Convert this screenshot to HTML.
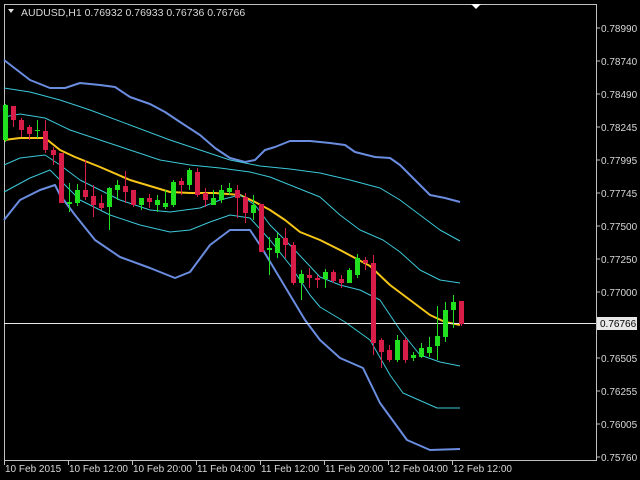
<!DOCTYPE html>
<html><head><style>
html,body{margin:0;padding:0;background:#000;}
svg{display:block;}
text{font-family:"Liberation Sans",sans-serif;font-size:10px;fill:#d8d8d8;}
</style></head><body>
<svg width="640" height="480" viewBox="0 0 640 480" xmlns="http://www.w3.org/2000/svg">
<rect width="640" height="480" fill="#000"/>
<!-- frame -->
<polyline points="4.5,460.5 4.5,4.5 596.5,4.5 596.5,460.5 4.5,460.5" fill="none" stroke="#c0c0c0" stroke-width="1"/>
<polygon points="471,4 481,4 476,9" fill="#fff"/>
<!-- header -->
<polygon points="8,9 14,9 11,13" fill="#e0e0e0"/>
<text x="21" y="16" style="font-size:10.5px">AUDUSD,H1  0.76932 0.76933 0.76736 0.76766</text>
<!-- bands -->
<g fill="none" stroke-linejoin="round">
<polyline stroke="#6a8de0" stroke-width="2" points="4,60 30,80 50,88 65,88 80,83 100,85 115,87 130,97 150,104 165,112 180,122 200,135 215,148 230,158 245,162 255,160 265,150 275,147 290,141 310,141 330,143 345,145 355,152 375,157 390,158 400,165 410,175 420,185 430,195 445,198 460,202"/>
<polyline stroke="#3cc8d8" stroke-width="1" points="4,88 30,92 60,100 90,110 130,125 170,140 200,150 230,160 260,166 290,169 320,173 350,180 380,188 400,200 420,215 440,230 460,241"/>
<polyline stroke="#3cc8d8" stroke-width="1" points="4,117 20,114 45,118 70,130 100,140 130,150 160,160 190,165 220,168 250,172 270,177 290,185 320,197 340,215 360,230 383,240 400,252 420,270 440,280 460,283"/>
<polyline stroke="#f5c518" stroke-width="2" points="4,140 20,138 45,138 60,150 75,157 100,167 130,180 150,186 170,192 190,193 215,193 240,195 255,202 270,210 285,220 300,232 320,240 340,250 355,258 370,266 390,285 410,300 430,315 445,322 460,325"/>
<polyline stroke="#3cc8d8" stroke-width="1" points="4,165 20,158 45,155 60,165 80,180 120,200 150,210 170,212 200,208 220,200 240,195 255,205 270,225 290,245 320,277 340,285 360,290 380,300 400,330 420,355 440,362 460,366"/>
<polyline stroke="#3cc8d8" stroke-width="1" points="4,192 30,178 50,170 60,180 80,200 110,215 140,225 170,232 190,230 210,222 230,215 250,218 270,240 290,265 310,295 320,307 345,322 370,340 390,375 403,393 437,408 460,408"/>
<polyline stroke="#6a8de0" stroke-width="2" points="4,220 20,200 40,190 55,185 60,195 75,215 95,240 120,257 150,268 175,278 190,272 210,245 230,230 250,230 260,245 275,270 290,295 305,320 320,340 340,358 363,368 380,403 407,440 430,450 460,449"/>
</g>
<!-- current price line -->
<line x1="4" y1="323.5" x2="596" y2="323.5" stroke="#e8e8e8" stroke-width="1"/>
<!-- candles -->
<g id="c">
<!-- x, wickTop, wickBot, bodyTop, bodyBot, color -->
</g>
<g stroke-width="1">
<!-- generated manually -->
<line x1="5.5" y1="104" x2="5.5" y2="142" stroke="#20e020"/><rect x="3" y="105" width="5" height="35" fill="#20e020"/>
<line x1="13.5" y1="106" x2="13.5" y2="127" stroke="#d81e48"/><rect x="11" y="106" width="5" height="14" fill="#d81e48"/>
<line x1="21.5" y1="118" x2="21.5" y2="137" stroke="#d81e48"/><rect x="19" y="120" width="5" height="10" fill="#d81e48"/>
<line x1="29.5" y1="125" x2="29.5" y2="140" stroke="#d81e48"/><rect x="27" y="127" width="5" height="7" fill="#d81e48"/>
<line x1="37.5" y1="120" x2="37.5" y2="138" stroke="#20e020"/><rect x="35" y="130" width="5" height="1" fill="#20e020"/>
<line x1="45.5" y1="120" x2="45.5" y2="153" stroke="#d81e48"/><rect x="43" y="131" width="5" height="19" fill="#d81e48"/>
<line x1="53.5" y1="147" x2="53.5" y2="165" stroke="#d81e48"/><rect x="51" y="150" width="5" height="5" fill="#d81e48"/>
<line x1="61.5" y1="153" x2="61.5" y2="203" stroke="#d81e48"/><rect x="59" y="153" width="5" height="50" fill="#d81e48"/>
<line x1="69.5" y1="183" x2="69.5" y2="212" stroke="#20e020"/><rect x="67" y="202" width="5" height="2" fill="#20e020"/>
<line x1="77.5" y1="184" x2="77.5" y2="206" stroke="#20e020"/><rect x="75" y="190" width="5" height="13" fill="#20e020"/>
<line x1="85.5" y1="160" x2="85.5" y2="200" stroke="#d81e48"/><rect x="83" y="190" width="5" height="7" fill="#d81e48"/>
<line x1="93.5" y1="185" x2="93.5" y2="217" stroke="#d81e48"/><rect x="91" y="196" width="5" height="9" fill="#d81e48"/>
<line x1="101.5" y1="195" x2="101.5" y2="210" stroke="#d81e48"/><rect x="99" y="203" width="5" height="5" fill="#d81e48"/>
<line x1="109.5" y1="187" x2="109.5" y2="230" stroke="#20e020"/><rect x="107" y="188" width="5" height="19" fill="#20e020"/>
<line x1="117.5" y1="180" x2="117.5" y2="200" stroke="#20e020"/><rect x="115" y="185" width="5" height="5" fill="#20e020"/>
<line x1="125.5" y1="171" x2="125.5" y2="203" stroke="#d81e48"/><rect x="123" y="186" width="5" height="6" fill="#d81e48"/>
<line x1="133.5" y1="190" x2="133.5" y2="207" stroke="#d81e48"/><rect x="131" y="190" width="5" height="15" fill="#d81e48"/>
<line x1="141.5" y1="198" x2="141.5" y2="210" stroke="#20e020"/><rect x="139" y="198" width="5" height="7" fill="#20e020"/>
<line x1="149.5" y1="194" x2="149.5" y2="208" stroke="#d81e48"/><rect x="147" y="198" width="5" height="4" fill="#d81e48"/>
<line x1="157.5" y1="195" x2="157.5" y2="212" stroke="#20e020"/><rect x="155" y="200" width="5" height="5" fill="#20e020"/>
<line x1="165.5" y1="190" x2="165.5" y2="209" stroke="#20e020"/><rect x="163" y="203" width="5" height="4" fill="#20e020"/>
<line x1="173.5" y1="180" x2="173.5" y2="207" stroke="#20e020"/><rect x="171" y="182" width="5" height="23" fill="#20e020"/>
<line x1="181.5" y1="178" x2="181.5" y2="195" stroke="#d81e48"/><rect x="179" y="181" width="5" height="4" fill="#d81e48"/>
<line x1="189.5" y1="168" x2="189.5" y2="190" stroke="#20e020"/><rect x="187" y="170" width="5" height="15" fill="#20e020"/>
<line x1="197.5" y1="168" x2="197.5" y2="197" stroke="#d81e48"/><rect x="195" y="172" width="5" height="23" fill="#d81e48"/>
<line x1="205.5" y1="188" x2="205.5" y2="207" stroke="#d81e48"/><rect x="203" y="193" width="5" height="7" fill="#d81e48"/>
<line x1="213.5" y1="190" x2="213.5" y2="205" stroke="#20e020"/><rect x="211" y="198" width="5" height="7" fill="#20e020"/>
<line x1="221.5" y1="185" x2="221.5" y2="203" stroke="#20e020"/><rect x="219" y="190" width="5" height="10" fill="#20e020"/>
<line x1="229.5" y1="183" x2="229.5" y2="195" stroke="#20e020"/><rect x="227" y="188" width="5" height="4" fill="#20e020"/>
<line x1="237.5" y1="185" x2="237.5" y2="218" stroke="#d81e48"/><rect x="235" y="190" width="5" height="8" fill="#d81e48"/>
<line x1="245.5" y1="193" x2="245.5" y2="223" stroke="#d81e48"/><rect x="243" y="197" width="5" height="16" fill="#d81e48"/>
<line x1="253.5" y1="195" x2="253.5" y2="220" stroke="#20e020"/><rect x="251" y="205" width="5" height="8" fill="#20e020"/>
<line x1="261.5" y1="204" x2="261.5" y2="252" stroke="#d81e48"/><rect x="259" y="204" width="5" height="48" fill="#d81e48"/>
<line x1="269.5" y1="237" x2="269.5" y2="275" stroke="#20e020"/><rect x="267" y="248" width="5" height="2" fill="#20e020"/>
<line x1="277.5" y1="233" x2="277.5" y2="258" stroke="#20e020"/><rect x="275" y="238" width="5" height="15" fill="#20e020"/>
<line x1="285.5" y1="228" x2="285.5" y2="258" stroke="#d81e48"/><rect x="283" y="238" width="5" height="7" fill="#d81e48"/>
<line x1="293.5" y1="242" x2="293.5" y2="285" stroke="#d81e48"/><rect x="291" y="245" width="5" height="38" fill="#d81e48"/>
<line x1="301.5" y1="270" x2="301.5" y2="300" stroke="#20e020"/><rect x="299" y="274" width="5" height="9" fill="#20e020"/>
<line x1="309.5" y1="268" x2="309.5" y2="288" stroke="#d81e48"/><rect x="307" y="275" width="5" height="3" fill="#d81e48"/>
<line x1="317.5" y1="275" x2="317.5" y2="288" stroke="#d81e48"/><rect x="315" y="278" width="5" height="2" fill="#d81e48"/>
<line x1="325.5" y1="269" x2="325.5" y2="288" stroke="#20e020"/><rect x="323" y="272" width="5" height="7" fill="#20e020"/>
<line x1="333.5" y1="270" x2="333.5" y2="283" stroke="#d81e48"/><rect x="331" y="272" width="5" height="9" fill="#d81e48"/>
<line x1="341.5" y1="275" x2="341.5" y2="288" stroke="#d81e48"/><rect x="339" y="279" width="5" height="4" fill="#d81e48"/>
<line x1="349.5" y1="268" x2="349.5" y2="283" stroke="#20e020"/><rect x="347" y="270" width="5" height="13" fill="#20e020"/>
<line x1="357.5" y1="254" x2="357.5" y2="278" stroke="#20e020"/><rect x="355" y="258" width="5" height="17" fill="#20e020"/>
<line x1="365.5" y1="257" x2="365.5" y2="270" stroke="#d81e48"/><rect x="363" y="260" width="5" height="3" fill="#d81e48"/>
<line x1="373.5" y1="255" x2="373.5" y2="355" stroke="#d81e48"/><rect x="371" y="263" width="5" height="80" fill="#d81e48"/>
<line x1="381.5" y1="338" x2="381.5" y2="368" stroke="#d81e48"/><rect x="379" y="340" width="5" height="12" fill="#d81e48"/>
<line x1="389.5" y1="345" x2="389.5" y2="362" stroke="#d81e48"/><rect x="387" y="350" width="5" height="10" fill="#d81e48"/>
<line x1="397.5" y1="335" x2="397.5" y2="362" stroke="#20e020"/><rect x="395" y="340" width="5" height="20" fill="#20e020"/>
<line x1="405.5" y1="338" x2="405.5" y2="363" stroke="#d81e48"/><rect x="403" y="340" width="5" height="20" fill="#d81e48"/>
<line x1="413.5" y1="352" x2="413.5" y2="361" stroke="#20e020"/><rect x="411" y="355" width="5" height="3" fill="#20e020"/>
<line x1="421.5" y1="343" x2="421.5" y2="358" stroke="#20e020"/><rect x="419" y="348" width="5" height="9" fill="#20e020"/>
<line x1="429.5" y1="337" x2="429.5" y2="357" stroke="#20e020"/><rect x="427" y="347" width="5" height="6" fill="#20e020"/>
<line x1="437.5" y1="306" x2="437.5" y2="360" stroke="#20e020"/><rect x="435" y="336" width="5" height="10" fill="#20e020"/>
<line x1="445.5" y1="302" x2="445.5" y2="342" stroke="#20e020"/><rect x="443" y="310" width="5" height="27" fill="#20e020"/>
<line x1="453.5" y1="295" x2="453.5" y2="328" stroke="#20e020"/><rect x="451" y="302" width="5" height="8" fill="#20e020"/>
<line x1="461.5" y1="301" x2="461.5" y2="326" stroke="#d81e48"/><rect x="459" y="301" width="5" height="23" fill="#d81e48"/>
</g>
<!-- price axis -->
<g stroke="#c0c0c0">
<line x1="596" y1="28" x2="600" y2="28"/><line x1="596" y1="61" x2="600" y2="61"/><line x1="596" y1="94" x2="600" y2="94"/><line x1="596" y1="127" x2="600" y2="127"/><line x1="596" y1="160" x2="600" y2="160"/><line x1="596" y1="193" x2="600" y2="193"/><line x1="596" y1="226" x2="600" y2="226"/><line x1="596" y1="259" x2="600" y2="259"/><line x1="596" y1="292" x2="600" y2="292"/><line x1="596" y1="358" x2="600" y2="358"/><line x1="596" y1="391" x2="600" y2="391"/><line x1="596" y1="424" x2="600" y2="424"/><line x1="596" y1="457" x2="600" y2="457"/>
</g>
<g>
<text x="601" y="32">0.78990</text>
<text x="601" y="65">0.78740</text>
<text x="601" y="98">0.78490</text>
<text x="601" y="131">0.78245</text>
<text x="601" y="164">0.77995</text>
<text x="601" y="197">0.77745</text>
<text x="601" y="230">0.77500</text>
<text x="601" y="263">0.77250</text>
<text x="601" y="296">0.77000</text>
<text x="601" y="362">0.76505</text>
<text x="601" y="395">0.76255</text>
<text x="601" y="428">0.76005</text>
<text x="601" y="461">0.75760</text>
</g>
<rect x="597" y="317" width="40" height="13" fill="#e8e8e8"/>
<text x="600" y="327" style="fill:#000">0.76766</text>
<!-- time axis -->
<g stroke="#c0c0c0">
<line x1="4.5" y1="460" x2="4.5" y2="465"/><line x1="68.5" y1="460" x2="68.5" y2="465"/><line x1="132.5" y1="460" x2="132.5" y2="465"/><line x1="196.5" y1="460" x2="196.5" y2="465"/><line x1="260.5" y1="460" x2="260.5" y2="465"/><line x1="324.5" y1="460" x2="324.5" y2="465"/><line x1="388.5" y1="460" x2="388.5" y2="465"/><line x1="452.5" y1="460" x2="452.5" y2="465"/>
</g>
<g>
<text x="5" y="472">10 Feb 2015</text>
<text x="69" y="472">10 Feb 12:00</text>
<text x="133" y="472">10 Feb 20:00</text>
<text x="197" y="472">11 Feb 04:00</text>
<text x="261" y="472">11 Feb 12:00</text>
<text x="325" y="472">11 Feb 20:00</text>
<text x="389" y="472">12 Feb 04:00</text>
<text x="453" y="472">12 Feb 12:00</text>
</g>
</svg>
</body></html>
